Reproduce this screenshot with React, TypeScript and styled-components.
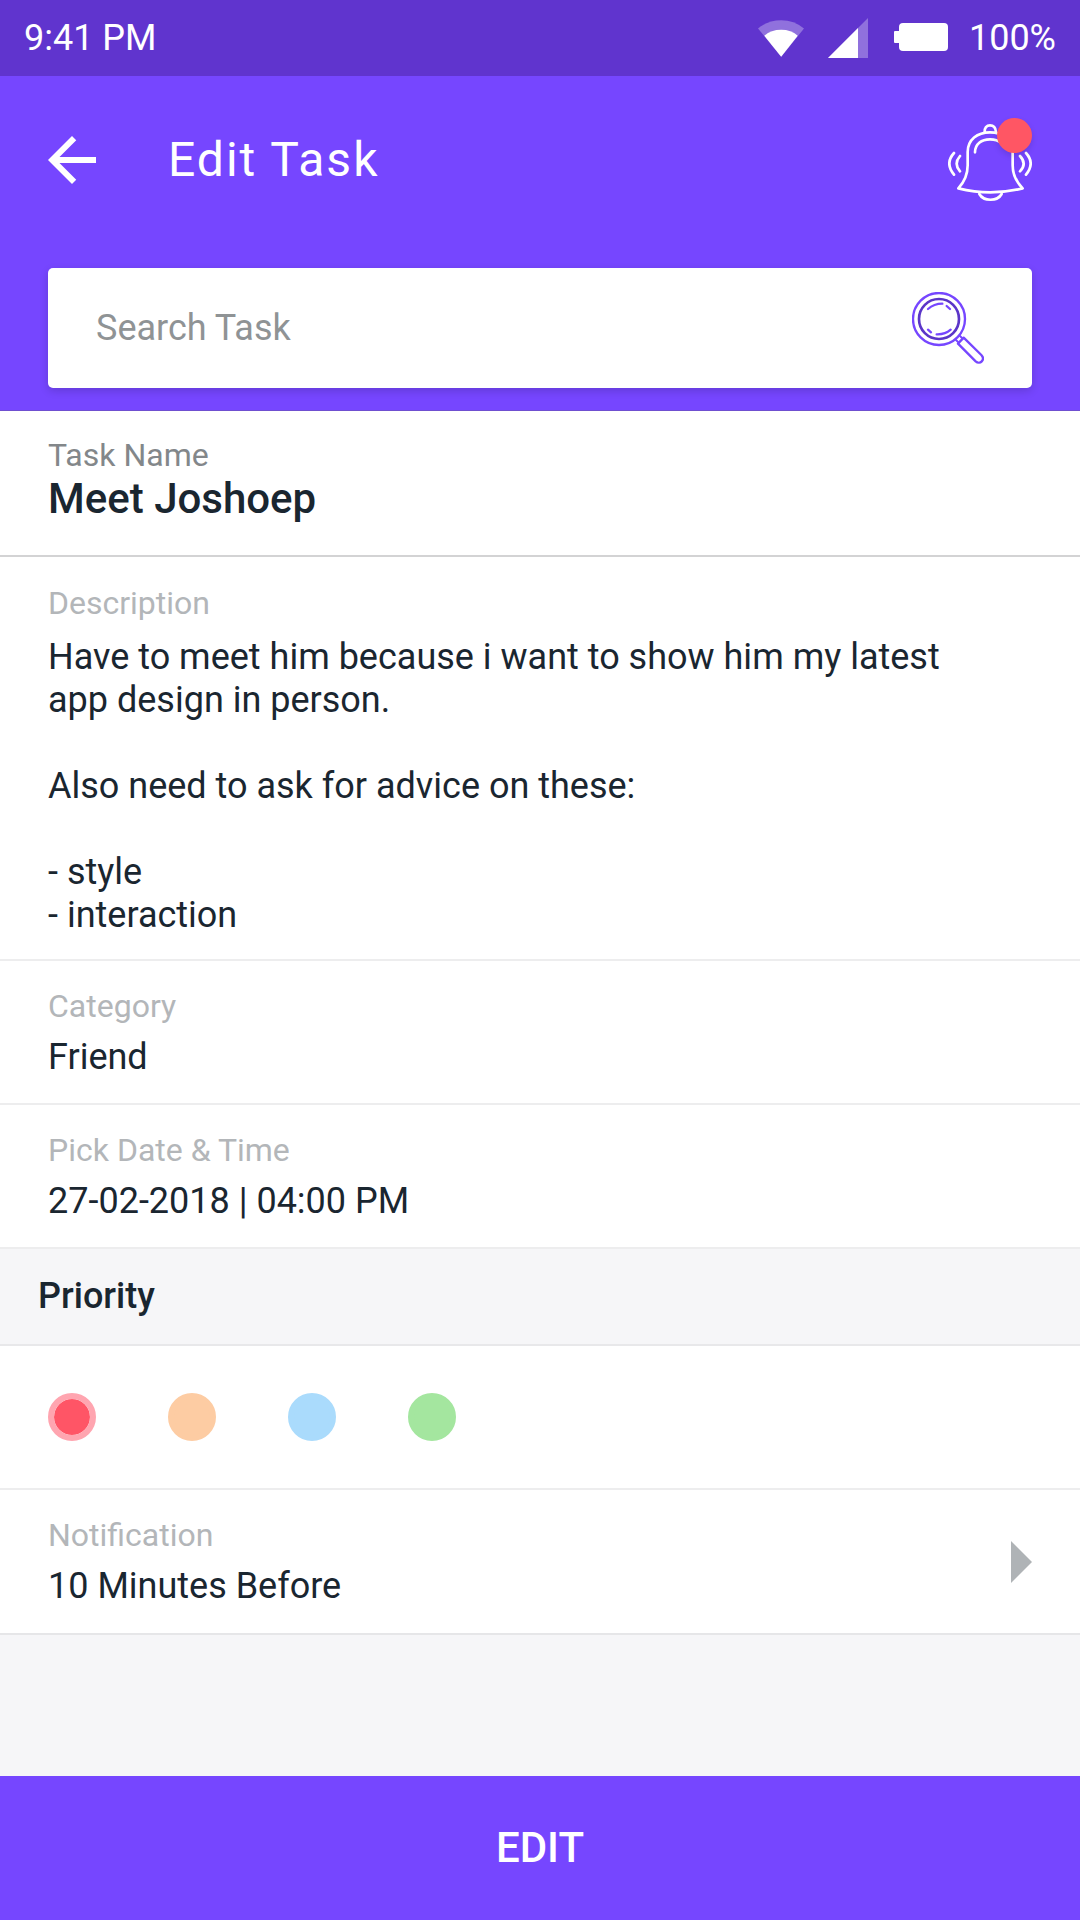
import React, { useState } from "react";
import styled, { createGlobalStyle } from "styled-components";

const color = {
  primary: "#7646ff",
  primaryDark: "#6034ce",
  ink: "#1a2630",
  label: "#b3b6b9",
  labelStrong: "#83878a",
  line: "#ededee",
  panel: "#f6f6f8",
  alert: "#ff5664",
};

const GlobalStyle = createGlobalStyle`
  *, *::before, *::after { box-sizing: border-box; }
  body {
    margin: 0;
    background: ${color.panel};
    color: ${color.ink};
    font-family: Roboto, "Noto Sans", sans-serif;
    font-size: 36px;
    line-height: 43px;
  }
  button, input, textarea { font: inherit; color: inherit; }
`;

const Screen = styled.div`
  display: flex;
  flex-direction: column;
  min-height: 100vh;
`;

const StatusBar = styled.div`
  display: flex;
  align-items: center;
  justify-content: space-between;
  min-height: 76px;
  padding: 0 24px;
  background: ${color.primaryDark};
  color: #fff;
`;

const StatusGroup = styled.div<{ $gap: number }>`
  display: flex;
  align-items: center;
  gap: ${(p) => p.$gap}px;
`;

const Header = styled.header`
  display: flex;
  flex-direction: column;
  gap: 66px;
  padding: 42px 48px 22px;
  background: ${color.primary};
  border-bottom: 1px solid #6f4fd0;
`;

const NavRow = styled.div`
  display: flex;
  align-items: center;
  gap: 72px;
  color: #fff;
`;

const Title = styled.h1`
  flex: 1;
  margin: 0;
  font-size: 48px;
  line-height: 56px;
  font-weight: 400;
  letter-spacing: 2px;
`;

const IconButton = styled.button`
  position: relative;
  display: flex;
  flex: none;
  padding: 0;
  border: 0;
  background: none;
  cursor: pointer;
`;

const Badge = styled.span`
  position: absolute;
  top: 0;
  right: 0;
  width: 35px;
  height: 35px;
  border-radius: 50%;
  background: ${color.alert};
  box-shadow: 0 3px 6px rgba(0, 0, 0, 0.12);
`;

const SearchBox = styled.form`
  display: flex;
  align-items: center;
  min-height: 120px;
  padding: 0 48px;
  border-radius: 5px;
  background: #fff;
  box-shadow: 0 3px 9px rgba(0, 0, 0, 0.16);
`;

const SearchInput = styled.input`
  flex: 1;
  min-width: 0;
  padding: 0;
  border: 0;
  outline: 0;
  background: none;
  &::placeholder {
    color: #8f9395;
    opacity: 1;
  }
`;

const Form = styled.main`
  display: flex;
  flex-direction: column;
`;

const Row = styled.div`
  display: flex;
  flex-direction: column;
  gap: 10px;
  padding: 25px 48px 24px;
  border-bottom: 2px solid ${color.line};
  background: #fff;
`;

const NameRow = styled(Row)`
  gap: 0;
  padding: 24px 48px 32px;
  border-bottom-color: #d3d3d4;
`;

const DescriptionRow = styled(Row)`
  gap: 13px;
  padding: 26px 48px 22px;
`;

const Label = styled.label<{ $strong?: boolean }>`
  font-size: 32px;
  line-height: 40px;
  color: ${(p) => (p.$strong ? color.labelStrong : color.label)};
`;

const Field = styled.input`
  width: 100%;
  height: 43px;
  padding: 0;
  border: 0;
  outline: 0;
  background: none;
`;

const NameField = styled(Field)`
  height: 48px;
  font-size: 42px;
  line-height: 48px;
  font-weight: 500;
`;

const Description = styled.textarea`
  display: block;
  width: 100%;
  padding: 0 72px 0 0;
  border: 0;
  outline: 0;
  resize: none;
  overflow: hidden;
  background: none;
`;

const SectionTitle = styled.h2`
  margin: 0;
  padding: 26px 38px;
  border-bottom: 2px solid #e8e8ea;
  background: ${color.panel};
  font-size: 36px;
  line-height: 43px;
  font-weight: 500;
`;

const PriorityRow = styled.div`
  display: flex;
  gap: 72px;
  padding: 47px 48px;
  border-bottom: 2px solid ${color.line};
  background: #fff;
`;

const PriorityDot = styled.input<{ $soft: string; $full: string }>`
  appearance: none;
  width: 48px;
  height: 48px;
  margin: 0;
  border: 6px solid ${(p) => p.$soft};
  border-radius: 50%;
  background: ${(p) => p.$soft};
  cursor: pointer;
  &:checked {
    background: ${(p) => p.$full} padding-box;
  }
`;

const NotificationRow = styled.button`
  display: flex;
  align-items: center;
  justify-content: space-between;
  padding: 25px 48px;
  border: 0;
  border-bottom: 2px solid #e6e6e8;
  background: #fff;
  text-align: left;
  cursor: pointer;
`;

const NotificationText = styled.span`
  display: flex;
  flex-direction: column;
  gap: 10px;
`;

const Caption = styled.span`
  font-size: 32px;
  line-height: 40px;
  color: ${color.label};
`;

const Submit = styled.button`
  min-height: 144px;
  margin-top: auto;
  border: 0;
  background: ${color.primary};
  color: #fff;
  font-size: 42px;
  line-height: 48px;
  font-weight: 500;
  cursor: pointer;
`;

const WifiIcon = () => (
  <svg width="46" height="37" viewBox="83 60 139 111" fill="#fff" aria-hidden="true">
    <path d="M83 85Q114 60 153 60T222 85L153 171Z" opacity=".3" />
    <path d="M102 107Q123 89 153 89T203 107L153 171Z" />
  </svg>
);

const SignalIcon = () => (
  <svg width="42" height="40" viewBox="0 0 42 40" fill="#fff" aria-hidden="true">
    <path d="M0 40L40 0V40Z" opacity=".3" />
    <path d="M0 40L30 10V40Z" />
  </svg>
);

const BatteryIcon = () => (
  <svg width="54" height="30" viewBox="0 0 54 30" fill="#fff" aria-hidden="true">
    <rect x="5" width="49" height="28" rx="4" />
    <rect y="8" width="6" height="12" rx="1" />
  </svg>
);

const BackIcon = () => (
  <svg width="48" height="48" viewBox="4 4 16 16" fill="currentColor" aria-hidden="true">
    <path d="M20 11H7.83l5.59-5.59L12 4l-8 8 8 8 1.41-1.41L7.83 13H20z" />
  </svg>
);

const BellIcon = () => (
  <svg
    width="84"
    height="84"
    viewBox="654 354 252 252"
    fill="none"
    stroke="#fff"
    strokeWidth="8"
    strokeLinecap="round"
    strokeLinejoin="round"
    aria-hidden="true"
  >
    <path d="M764 396C763 384 770 376 780 376S797 384 798 396" />
    <path d="M685 565C706 543 713 524 713 496V456C713 419 742 397 780 397S848 419 848 456V496C848 524 856 543 878 565Q781 589 685 565Z" />
    <path d="M735 457C735 432 754 418 780 418C796 418 805 421 812 428" />
    <path d="M748 582C761 605 802 605 815 582" />
    <path d="M672 459Q644 490 672 524M690 468Q670 491 690 514" />
    <path d="M888 459Q916 490 888 524M870 468Q892 491 870 514" />
  </svg>
);

const MagnifierIcon = () => (
  <svg
    width="72"
    height="72"
    viewBox="96 96 216 216"
    fill="none"
    stroke={color.primary}
    strokeWidth="7"
    strokeLinecap="round"
    strokeLinejoin="round"
    aria-hidden="true"
  >
    <circle cx="177" cy="177" r="78" />
    <circle cx="177" cy="177" r="60" stroke="#5b35c8" strokeWidth="8" />
    <path d="M144 147Q162 131 187 131M200 138L210 147M144 209L153 217M170 223Q195 224 212 209" />
    <path d="M251 233L304 285C317 299 300 316 287 304L234 251Z" />
    <path d="M228 240L236 248M240 228L248 236" strokeWidth="6" />
  </svg>
);

const ArrowIcon = () => (
  <svg width="21" height="42" viewBox="0 0 21 42" fill="#afb3b6" aria-hidden="true">
    <path d="M0 0L21 21L0 42Z" />
  </svg>
);

const priorities = [
  { name: "Urgent", soft: "#ffa5b0", full: "#ff5566" },
  { name: "High", soft: "#fdcca3", full: "#fb994a" },
  { name: "Normal", soft: "#aadbfc", full: "#55b7f8" },
  { name: "Low", soft: "#a4e69f", full: "#4acd40" },
];

const description = `Have to meet him because i want to show him my latest app design in person.

Also need to ask for advice on these:

- style
- interaction`;

export default function App() {
  const [priority, setPriority] = useState("Urgent");

  return (
    <Screen>
      <GlobalStyle />
      <StatusBar>
        <span>9:41 PM</span>
        <StatusGroup $gap={21}>
          <StatusGroup $gap={24}>
            <WifiIcon />
            <SignalIcon />
            <BatteryIcon />
          </StatusGroup>
          <span>100%</span>
        </StatusGroup>
      </StatusBar>

      <Header>
        <NavRow>
          <IconButton type="button" aria-label="Back">
            <BackIcon />
          </IconButton>
          <Title>Edit Task</Title>
          <IconButton type="button" aria-label="Notifications">
            <BellIcon />
            <Badge />
          </IconButton>
        </NavRow>
        <SearchBox role="search" onSubmit={(e) => e.preventDefault()}>
          <SearchInput type="text" placeholder="Search Task" aria-label="Search Task" />
          <IconButton type="submit" aria-label="Search">
            <MagnifierIcon />
          </IconButton>
        </SearchBox>
      </Header>

      <Form>
        <NameRow>
          <Label htmlFor="task-name" $strong>Task Name</Label>
          <NameField id="task-name" defaultValue="Meet Joshoep" />
        </NameRow>
        <DescriptionRow>
          <Label htmlFor="description">Description</Label>
          <Description id="description" rows={7} spellCheck={false} defaultValue={description} />
        </DescriptionRow>
        <Row>
          <Label htmlFor="category">Category</Label>
          <Field id="category" defaultValue="Friend" />
        </Row>
        <Row>
          <Label htmlFor="date-time">Pick Date &amp; Time</Label>
          <Field id="date-time" defaultValue="27-02-2018 | 04:00 PM" />
        </Row>
        <SectionTitle id="priority-title">Priority</SectionTitle>
        <PriorityRow role="radiogroup" aria-labelledby="priority-title">
          {priorities.map((p) => (
            <PriorityDot
              key={p.name}
              type="radio"
              name="priority"
              aria-label={p.name}
              $soft={p.soft}
              $full={p.full}
              checked={priority === p.name}
              onChange={() => setPriority(p.name)}
            />
          ))}
        </PriorityRow>
        <NotificationRow type="button">
          <NotificationText>
            <Caption>Notification</Caption>
            <span>10 Minutes Before</span>
          </NotificationText>
          <ArrowIcon />
        </NotificationRow>
      </Form>

      <Submit type="button">EDIT</Submit>
    </Screen>
  );
}
